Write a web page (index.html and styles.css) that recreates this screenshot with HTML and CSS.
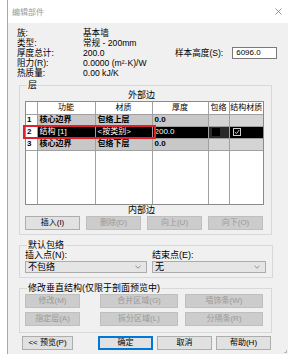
FILE: index.html
```html
<!DOCTYPE html>
<html lang="zh">
<head>
<meta charset="utf-8">
<title>编辑部件</title>
<link rel="stylesheet" href="styles.css">
</head>
<body>
<div class="dialog">
  <div class="titlebar">
    <span class="title">编辑部件</span>
    <svg class="close" width="7" height="7" viewBox="0 0 7 7"><path d="M0.5 0.5L6.5 6.5M6.5 0.5L0.5 6.5" stroke="#8a8a8a" stroke-width="0.9" fill="none"/></svg>
  </div>
  <div class="body">
    <div class="info">
      <div class="props">
        <span>族:</span><span>基本墙</span>
        <span>类型:</span><span>常规 - 200mm</span>
        <span>厚度总计:</span><span>200.0</span>
        <span>阻力(R):</span><span>0.0000 (m²·K)/W</span>
        <span>热质量:</span><span>0.00 kJ/K</span>
      </div>
      <div class="sample">
        <span>样本高度(S):</span>
        <span class="input">6096.0</span>
      </div>
    </div>

    <fieldset class="group layers">
      <legend>层</legend>
      <div class="edge">外部边</div>
      <div class="grid">
        <table>
          <colgroup>
            <col class="c-num"><col class="c-func"><col class="c-mat"><col class="c-thk"><col class="c-wrap"><col class="c-struct">
          </colgroup>
          <thead>
            <tr><th></th><th>功能</th><th>材质</th><th>厚度</th><th>包络</th><th>结构材质</th></tr>
          </thead>
          <tbody>
            <tr class="core"><td class="num">1</td><td>核心边界</td><td>包络上层</td><td>0.0</td><td class="lt"></td><td class="lt"></td></tr>
            <tr class="sel"><td class="num">2</td><td>结构 [1]</td><td>&lt;按类别&gt;</td><td>200.0</td><td class="cb-cell"><span class="cb"></span></td><td class="cb-cell"><span class="cb checked"><svg width="6" height="6" viewBox="0 0 6 6"><path d="M0.8 3L2.5 4.7L5.2 1" stroke="#ddd" stroke-width="0.9" fill="none"/></svg></span></td></tr>
            <tr class="core"><td class="num">3</td><td>核心边界</td><td>包络下层</td><td>0.0</td><td class="lt"></td><td class="lt"></td></tr>
            <tr class="empty"><td class="num"></td><td></td><td></td><td></td><td></td><td></td></tr>
          </tbody>
        </table>
        <div class="redmark"></div>
      </div>
      <div class="edge">内部边</div>
      <div class="btns four">
        <button class="btn">插入(I)</button>
        <button class="btn dis">删除(D)</button>
        <button class="btn dis">向上(U)</button>
        <button class="btn dis">向下(O)</button>
      </div>
    </fieldset>

    <fieldset class="group wrapping">
      <legend>默认包络</legend>
      <div class="wrap-cols">
        <div class="field">
          <span>插入点(N):</span>
          <div class="select"><span>不包络</span><svg width="6" height="4" viewBox="0 0 6 4"><path d="M0.5 0.8L3 3.2L5.5 0.8" stroke="#777" stroke-width="0.8" fill="none"/></svg></div>
        </div>
        <div class="field">
          <span>结束点(E):</span>
          <div class="select"><span>无</span><svg width="6" height="4" viewBox="0 0 6 4"><path d="M0.5 0.8L3 3.2L5.5 0.8" stroke="#777" stroke-width="0.8" fill="none"/></svg></div>
        </div>
      </div>
    </fieldset>

    <fieldset class="group vertical">
      <legend>修改垂直结构(仅限于剖面预览中)</legend>
      <div class="btns three">
        <button class="btn dis">修改(M)</button>
        <button class="btn dis">合并区域(G)</button>
        <button class="btn dis">墙饰条(W)</button>
        <button class="btn dis">指定层(A)</button>
        <button class="btn dis">拆分区域(L)</button>
        <button class="btn dis">分隔条(R)</button>
      </div>
    </fieldset>

    <div class="footer">
      <button class="btn preview">&lt;&lt; 预览(P)</button>
      <div class="actions">
        <button class="btn default">确定</button>
        <button class="btn">取消</button>
        <button class="btn">帮助(H)</button>
      </div>
    </div>
    <span class="grip"></span>
  </div>
</div>
</body>
</html>
```
FILE: styles.css
```css
* { box-sizing: border-box; }
html, body { margin: 0; padding: 0; background: #ffffff; }
body {
  font-family: "Liberation Sans", "Noto Sans CJK SC", sans-serif;
  font-size: 9px;
  line-height: 10px;
  color: #000;
}
.dialog {
  margin-left: 7px;
  width: 281px;
  height: 354px;
  border-left: 1px solid #a8a8a8;
  display: flex;
  flex-direction: column;
}
.titlebar {
  height: 23px;
  background: #fff;
  display: flex;
  align-items: center;
  justify-content: space-between;
  padding: 2px 6px 0 4px;
}
.title { color: #9a9a9a; font-size: 8px; }
.close { margin-top: -3px; }
.body {
  flex: 1;
  background: #f0f0f0;
  position: relative;
  padding: 5px 0 0 0;
}
.info {
  display: flex;
  align-items: center;
  padding-left: 9px;
}
.props {
  display: grid;
  grid-template-columns: 66px auto;
  grid-auto-rows: 10px;
  width: 158px;
  font-size: 8.6px;
}
.sample { display: flex; align-items: center; gap: 9px; font-size: 8.6px; }
.input {
  width: 45px;
  height: 12px;
  background: #fff;
  border: 1px solid #7a7a7a;
  line-height: 10px;
  padding-left: 3px;
  font-size: 8px;
}
.group {
  margin: 0 0 0 11px;
  width: 253px;
  border: 1px solid #d8d8d8;
  padding: 0;
}
.group legend {
  padding: 0 1px;
  margin-left: 2px;
  line-height: 10px;
  font-size: 9px;
}
.layers { margin-top: 2px; padding: 0 7px 4px 5px; }
.edge { text-align: center; line-height: 10px; height: 10px; padding-right: 6px; }
.layers .edge:first-of-type { height: 11px; line-height: 10px; }
.grid { position: relative; width: 239px; height: 104px; border: 1px solid #8a8a8a; background: #fff; }
table {
  border-collapse: collapse;
  table-layout: fixed;
  width: 237px;
  height: 102px;
}
col.c-num { width: 11px; }
col.c-func { width: 58px; }
col.c-mat { width: 57px; }
col.c-thk { width: 56px; }
col.c-wrap { width: 21px; }
col.c-struct { width: 34px; }
th, td {
  border: 1px solid #a0a0a0;
  padding: 0 0 0 2px;
  height: 12px;
  line-height: 10px;
  font-size: 8px;
  white-space: nowrap;
  overflow: hidden;
  text-align: left;
}
th { font-weight: normal; text-align: center; padding: 0; background: #fff; }
thead tr th { border-top: none; }
tr th:first-child, tr td:first-child { border-left: none; }
tr th:last-child, tr td:last-child { border-right: none; }
td.num { background: #fff; padding-left: 1px; font-weight: bold; }
tr.core td { background: #c8c8c8; font-weight: bold; }
tr.core td.lt { background: #d4d4d4; }
tr.core td.num { background: #fff; }
tr.sel td { background: #000; color: #fff; }
tr.sel td.num { background: #fff; color: #000; }
tr.sel td.cb-cell { background: #2a2a2a; padding: 1px 0 0 3px; }
tr.sel td.cb-cell:last-child { background: #000; }
.cb { display: inline-block; width: 8px; height: 8px; background: #000; vertical-align: top; }
.cb.checked { border: 1px solid #cfcfcf; background: #000; }
.cb.checked svg { display: block; }
tr.empty td { height: auto; border-bottom: none; background: #fff; }
.redmark {
  position: absolute;
  left: -3px;
  top: 23px;
  width: 133px;
  height: 14px;
  border: 2px solid #e0202a;
}
.btns { display: grid; gap: 3px 6px; }
.btns.four { grid-template-columns: repeat(4, 55px); margin-top: 1px; }
.btn {
  font-family: inherit;
  font-size: 8px;
  line-height: 10px;
  height: 14px;
  padding: 0;
  background: #e1e1e1;
  border: 1px solid #adadad;
  color: #000;
  border-radius: 0;
}
.btn.dis { background: #cccccc; border-color: #bfbfbf; color: #9a9a9a; }
.btn.default { border: 1px solid #0078d7; box-shadow: inset 0 0 0 1px #0078d7; }
.wrapping { margin-top: 5px; padding: 0 6px 4px 5px; }
.wrap-cols { display: grid; grid-template-columns: 122px 114px; gap: 5px; }
.field { display: flex; flex-direction: column; }
.field span { line-height: 10px; }
.select {
  margin-top: 1px;
  height: 12px;
  border: 1px solid #acacac;
  background: #e5e5e5;
  display: flex;
  align-items: center;
  justify-content: space-between;
  padding: 0 5px 0 2px;
}
.select span { font-size: 9px; }
.vertical { margin-top: 5px; padding: 1px 7px 6px 5px; height: 50px; }
.btns.three { grid-template-columns: 55px 91px 78px; gap: 4px 7px; }
.btns.three .btn:nth-child(3n+2) { margin-left: 13px; width: 78px; }
.footer { display: flex; padding: 3px 0 0 14px; gap: 25px; }
.footer .preview { width: 51px; }
.actions { display: flex; gap: 4px; }
.actions .btn { width: 55px; }
.grip {
  position: absolute;
  right: 1px;
  bottom: 1px;
  width: 3px;
  height: 3px;
  border-right: 1px solid #bbb;
  border-bottom: 1px solid #bbb;
}
```
